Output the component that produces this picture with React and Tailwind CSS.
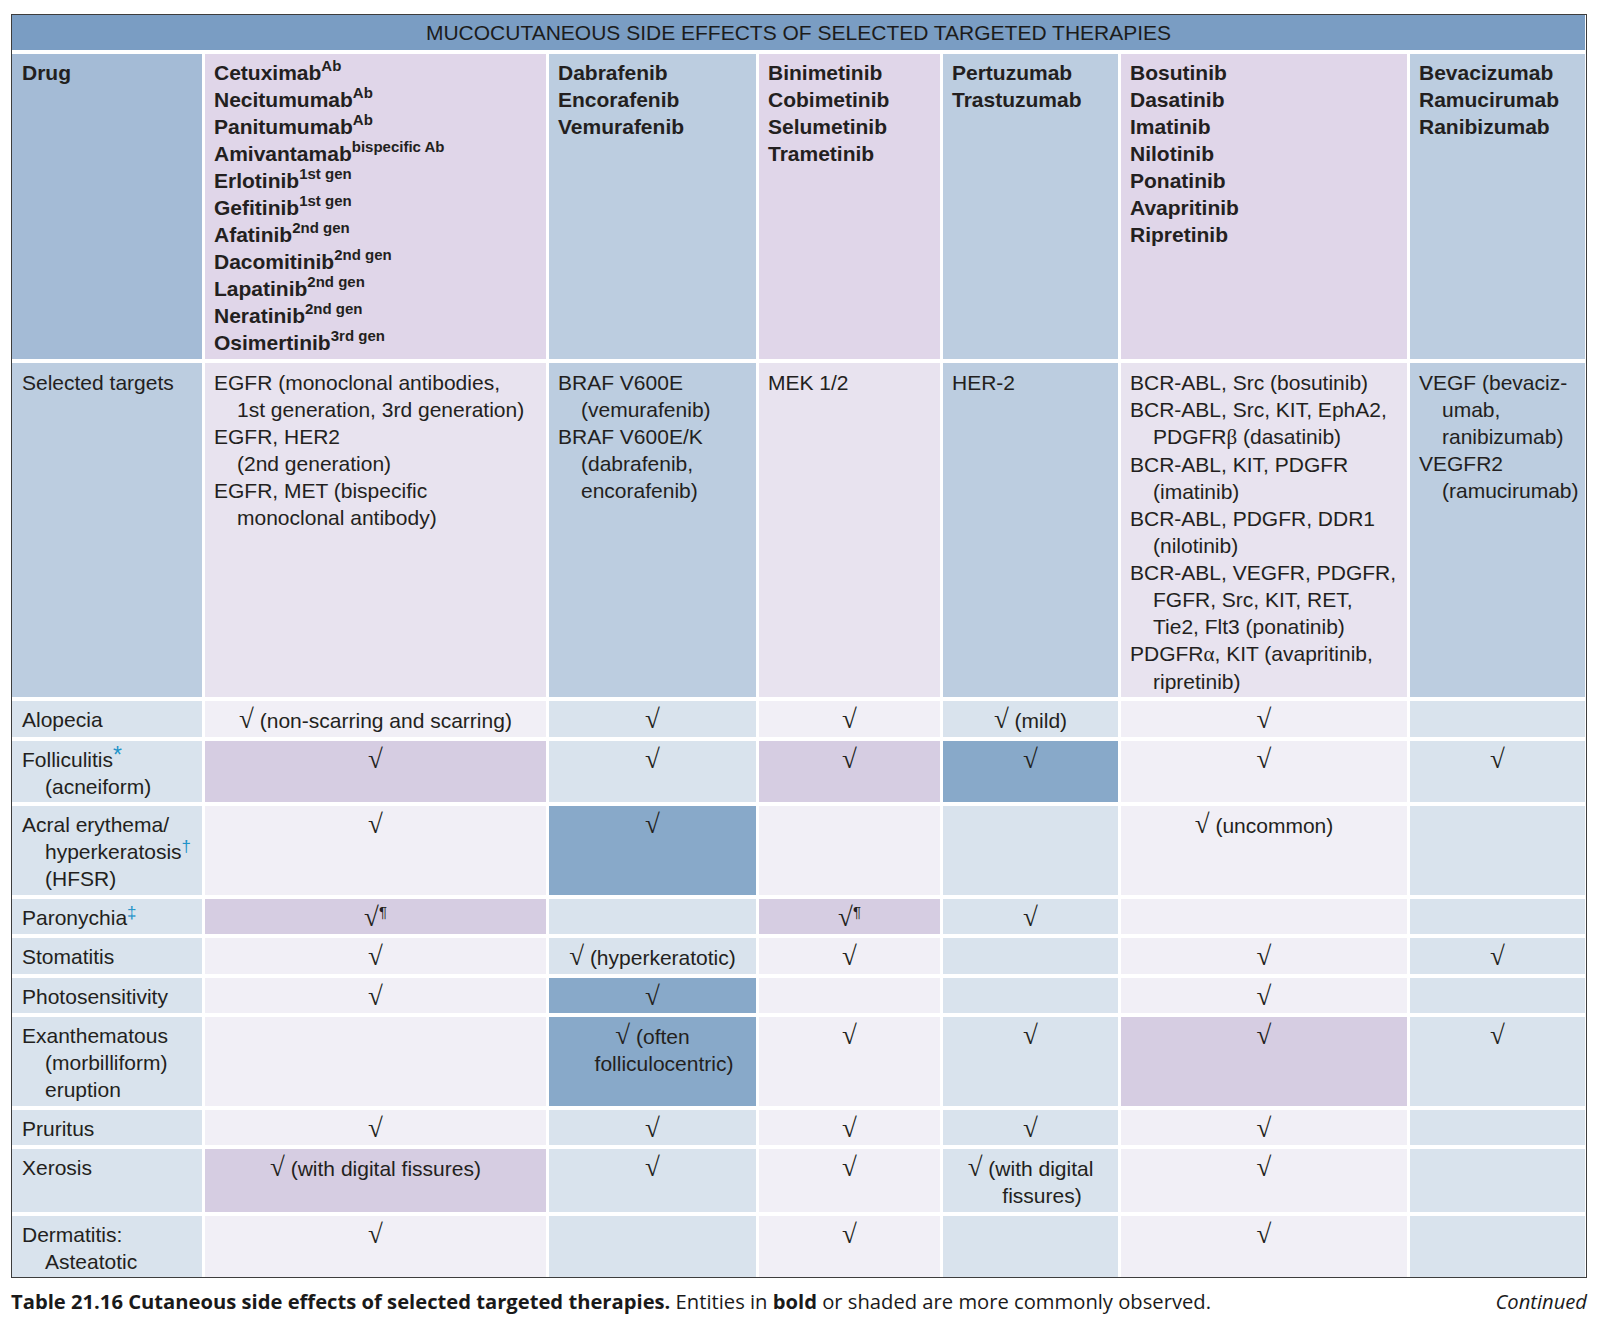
const COLS = "grid-cols-[190px_341px_207px_181px_175px_286px_175px]";

const drugs = [
  [
    ["Cetuximab", "Ab"],
    ["Necitumumab", "Ab"],
    ["Panitumumab", "Ab"],
    ["Amivantamab", "bispecific Ab"],
    ["Erlotinib", "1st gen"],
    ["Gefitinib", "1st gen"],
    ["Afatinib", "2nd gen"],
    ["Dacomitinib", "2nd gen"],
    ["Lapatinib", "2nd gen"],
    ["Neratinib", "2nd gen"],
    ["Osimertinib", "3rd gen"],
  ],
  [["Dabrafenib"], ["Encorafenib"], ["Vemurafenib"]],
  [["Binimetinib"], ["Cobimetinib"], ["Selumetinib"], ["Trametinib"]],
  [["Pertuzumab"], ["Trastuzumab"]],
  [["Bosutinib"], ["Dasatinib"], ["Imatinib"], ["Nilotinib"], ["Ponatinib"], ["Avapritinib"], ["Ripretinib"]],
  [["Bevacizumab"], ["Ramucirumab"], ["Ranibizumab"]],
];

const targets = [
  [
    ["EGFR (monoclonal antibodies,", "1st generation, 3rd generation)"],
    ["EGFR, HER2", "(2nd generation)"],
    ["EGFR, MET (bispecific", "monoclonal antibody)"],
  ],
  [
    ["BRAF V600E", "(vemurafenib)"],
    ["BRAF V600E/K", "(dabrafenib,", "encorafenib)"],
  ],
  [["MEK 1/2"]],
  [["HER-2"]],
  [
    ["BCR-ABL, Src (bosutinib)"],
    ["BCR-ABL, Src, KIT, EphA2,", "PDGFR@b (dasatinib)"],
    ["BCR-ABL, KIT, PDGFR", "(imatinib)"],
    ["BCR-ABL, PDGFR, DDR1", "(nilotinib)"],
    ["BCR-ABL, VEGFR, PDGFR,", "FGFR, Src, KIT, RET,", "Tie2, Flt3 (ponatinib)"],
    ["PDGFR@a, KIT (avapritinib,", "ripretinib)"],
  ],
  [
    ["VEGF (bevaciz-", "umab,", "ranibizumab)"],
    ["VEGFR2", "(ramucirumab)"],
  ],
];

// s: 1 = shaded, p: 1 = ¶ note after the tick
const rows = [
  {
    label: [["Alopecia"]],
    cells: [{ v: ["√ (non-scarring and scarring)"] }, { v: ["√"] }, { v: ["√"] }, { v: ["√ (mild)"] }, { v: ["√"] }, null],
  },
  {
    label: [["Folliculitis", "*"], ["(acneiform)"]],
    cells: [{ v: ["√"], s: 1 }, { v: ["√"] }, { v: ["√"], s: 1 }, { v: ["√"], s: 1 }, { v: ["√"] }, { v: ["√"] }],
  },
  {
    label: [["Acral erythema/"], ["hyperkeratosis", "†"], ["(HFSR)"]],
    cells: [{ v: ["√"] }, { v: ["√"], s: 1 }, null, null, { v: ["√ (uncommon)"] }, null],
  },
  {
    label: [["Paronychia", "‡"]],
    cells: [{ v: ["√"], s: 1, p: 1 }, null, { v: ["√"], s: 1, p: 1 }, { v: ["√"] }, null, null],
  },
  {
    label: [["Stomatitis"]],
    cells: [{ v: ["√"] }, { v: ["√ (hyperkeratotic)"] }, { v: ["√"] }, null, { v: ["√"] }, { v: ["√"] }],
  },
  {
    label: [["Photosensitivity"]],
    cells: [{ v: ["√"] }, { v: ["√"], s: 1 }, null, null, { v: ["√"] }, null],
  },
  {
    label: [["Exanthematous"], ["(morbilliform)"], ["eruption"]],
    cells: [null, { v: ["√ (often", "folliculocentric)"], s: 1 }, { v: ["√"] }, { v: ["√"] }, { v: ["√"], s: 1 }, { v: ["√"] }],
  },
  {
    label: [["Pruritus"]],
    cells: [{ v: ["√"] }, { v: ["√"] }, { v: ["√"] }, { v: ["√"] }, { v: ["√"] }, null],
  },
  {
    label: [["Xerosis"]],
    cells: [{ v: ["√ (with digital fissures)"], s: 1 }, { v: ["√"] }, { v: ["√"] }, { v: ["√ (with digital", "fissures)"] }, { v: ["√"] }, null],
  },
  {
    label: [["Dermatitis:"], ["Asteatotic"]],
    cells: [{ v: ["√"] }, null, { v: ["√"] }, null, { v: ["√"] }, null],
  },
];

const headBg = ["bg-[#e0d6e9]", "bg-[#bccde0]"];
const targetBg = ["bg-[#e8e3ef]", "bg-[#bccde0]"];
const bodyBg = ["bg-[#f1eff6]", "bg-[#d9e3ed]"];
const shadeBg = ["bg-[#d6cde2]", "bg-[#88a9c9]"];

function Greek({ text }) {
  // @a / @b stand for alpha / beta, set in serif like the print
  const parts = text.split(/(@a|@b)/);
  return parts.map((p, i) =>
    p === "@a" ? (
      <span key={i} className="font-['Liberation_Serif',serif]">α</span>
    ) : p === "@b" ? (
      <span key={i} className="font-['Liberation_Serif',serif]">β</span>
    ) : (
      p
    )
  );
}

function Entry({ lines }) {
  return (
    <div>
      {lines.map((l, i) => (
        <div key={i} className={i > 0 ? "pl-[23px]" : ""}>
          <Greek text={l} />
        </div>
      ))}
    </div>
  );
}

function CheckLine({ text, para }) {
  if (!text.startsWith("√")) return text;
  return (
    <>
      <span className="font-['Liberation_Serif',serif] text-[27px] leading-none">√</span>
      {para && <span className="text-[15px] leading-none relative -top-[9px]">¶</span>}
      {text.slice(1)}
    </>
  );
}

export default function App() {
  return (
    <div className="min-h-[1330px] w-[1600px] bg-white font-['Liberation_Sans',Arial,sans-serif] text-[#231f20]">
      <div className="pl-[11px] pt-[14px] w-[1587px]">
        <div className="border border-[#3d3d3d]">
          <div className={`grid ${COLS} gap-x-[3px] gap-y-[4px] bg-white text-[21px] leading-[27px]`}>
            <div className="col-span-7 h-[35px] bg-[#7a9dc3] flex items-center justify-center text-[21px] text-[#1c1c1c]">
              MUCOCUTANEOUS SIDE EFFECTS OF SELECTED TARGETED THERAPIES
            </div>

            {/* drug row */}
            <div className="bg-[#a4bbd6] px-[10px] pt-[5px] pb-[3px] font-bold">Drug</div>
            {drugs.map((list, ci) => (
              <div key={ci} className={`${headBg[ci % 2]} px-[9px] pt-[5px] pb-[3px] font-bold`}>
                {list.map(([name, sup]) => (
                  <div key={name}>
                    {name}
                    {sup && <span className="text-[15px] leading-none relative -top-[9px]">{sup}</span>}
                  </div>
                ))}
              </div>
            ))}

            {/* targets row */}
            <div className="bg-[#bccde0] px-[10px] pt-[6px] pb-[2px]">Selected targets</div>
            {targets.map((entries, ci) => (
              <div key={ci} className={`${targetBg[ci % 2]} px-[9px] pt-[6px] pb-[2px]`}>
                {entries.map((lines, i) => (
                  <Entry key={i} lines={lines} />
                ))}
              </div>
            ))}

            {/* effect rows */}
            {rows.map((row, ri) => (
              <Row key={ri} row={row} />
            ))}
          </div>
        </div>

        <div className="mt-[11px] flex justify-between items-center font-['Open_Sans',sans-serif] text-[20.2px] leading-[24px] text-[#1a1a1a]">
          <p>
            <span className="font-bold">Table 21.16 Cutaneous side effects of selected targeted therapies.</span> Entities in{" "}
            <span className="font-bold">bold</span> or shaded are more commonly observed.
          </p>
          <p className="italic">Continued</p>
        </div>
      </div>
    </div>
  );
}

function Row({ row }) {
  return (
    <>
      <div className="bg-[#d9e3ed] px-[10px] pt-[5px] pb-[2.5px]">
        {row.label.map(([text, mark], i) => (
          <div key={i} className={i > 0 ? "pl-[23px]" : ""}>
            {text}
            {mark === "*" && (
              <span className="text-[#1f93c9] text-[23px] leading-none relative -top-[4px]">*</span>
            )}
            {mark && mark !== "*" && (
              <span className="text-[#1f93c9] text-[17px] leading-none relative -top-[7px]">{mark}</span>
            )}
          </div>
        ))}
      </div>
      {row.cells.map((cell, ci) => {
        const bg = cell && cell.s ? shadeBg[ci % 2] : bodyBg[ci % 2];
        return (
          <div key={ci} className={`${bg} px-[6px] pt-[5px] pb-[2.5px] text-center`}>
            {cell &&
              cell.v.map((line, i) => (
                <div key={i} className={i > 0 ? "pl-[23px]" : ""}>
                  <CheckLine text={line} para={cell.p} />
                </div>
              ))}
          </div>
        );
      })}
    </>
  );
}
